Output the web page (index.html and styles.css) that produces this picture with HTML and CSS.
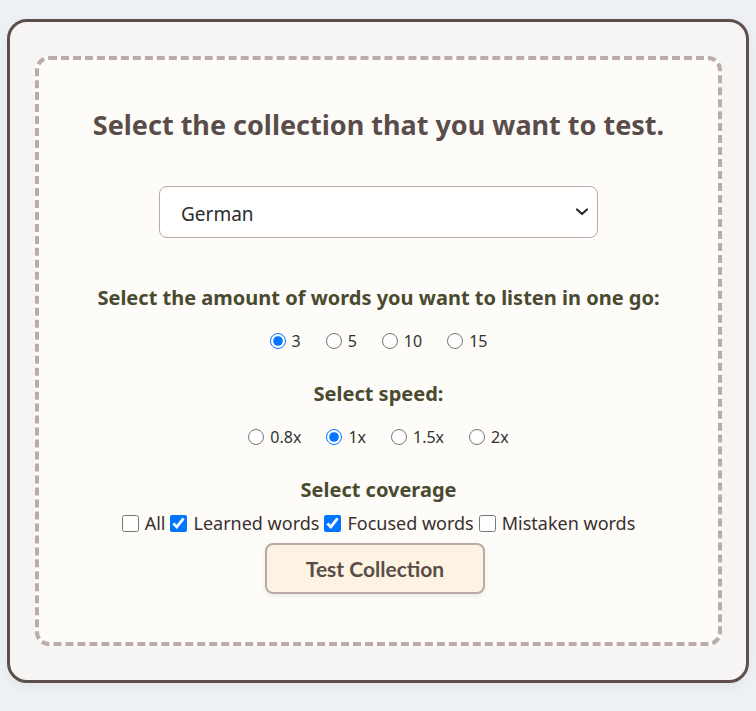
FILE: index.html
```html
<!DOCTYPE html>
<html lang="en">
<head>
<meta charset="utf-8">
<title>Test Collection</title>
<link rel="stylesheet" href="styles.css">
</head>
<body>
<main class="card">
  <section class="panel">
    <h1 class="title">Select the collection that you want to test.</h1>
    <div class="select-wrap">
      <select class="collection">
        <option>German</option>
      </select>
      <svg class="chevron" width="12" height="8" viewBox="0 0 12 8"><path d="M1 1.5 L6 6 L11 1.5" fill="none" stroke="#2b2b2b" stroke-width="2.2" stroke-linecap="round" stroke-linejoin="round"/></svg>
    </div>

    <h2 class="sub sub-first">Select the amount of words you want to listen in one go:</h2>
    <div class="options">
      <label class="opt"><input type="radio" name="amount" checked>3</label>
      <label class="opt"><input type="radio" name="amount">5</label>
      <label class="opt"><input type="radio" name="amount">10</label>
      <label class="opt"><input type="radio" name="amount">15</label>
    </div>

    <h2 class="sub">Select speed:</h2>
    <div class="options">
      <label class="opt"><input type="radio" name="speed">0.8x</label>
      <label class="opt"><input type="radio" name="speed" checked>1x</label>
      <label class="opt"><input type="radio" name="speed">1.5x</label>
      <label class="opt"><input type="radio" name="speed">2x</label>
    </div>

    <h2 class="sub sub-tight">Select coverage</h2>
    <div class="checks">
      <label class="chk"><input type="checkbox">All</label>
      <label class="chk"><input type="checkbox" checked>Learned words</label>
      <label class="chk"><input type="checkbox" checked>Focused words</label>
      <label class="chk"><input type="checkbox">Mistaken words</label>
    </div>

    <button class="test-btn" type="button">Test Collection</button>
  </section>
</main>
</body>
</html>
```

FILE: styles.css
```css
* { box-sizing: border-box; }

html, body {
  margin: 0;
  padding: 0;
}

body {
  background: #eff2f5;
  font-family: "Noto Sans", "Open Sans", sans-serif;
  padding: 19px 7px 29px;
}

.card {
  border: 3px solid #5d504c;
  border-radius: 20px;
  background: #f7f5f3;
  padding: 34px 24px 34px 25px;
  box-shadow: 0 4px 14px rgba(60, 70, 90, 0.08);
}

.panel {
  border: 4px dashed #bcaca8;
  border-radius: 14px;
  background: #fdfcf9;
  padding: 47px 20px 48px;
  display: flex;
  flex-direction: column;
  align-items: center;
}

.title {
  margin: 0;
  font-size: 27px;
  line-height: 36px;
  font-weight: 700;
  color: #5a4d49;
}

.select-wrap {
  position: relative;
  margin-top: 43px;
  width: 439px;
}

.collection {
  appearance: none;
  -webkit-appearance: none;
  width: 100%;
  height: 52px;
  border: 1px solid #b8a9a5;
  border-radius: 8px;
  background: #ffffff;
  padding: 3px 21px 0;
  font-family: inherit;
  font-size: 19px;
  color: #2c2c2c;
}

.chevron {
  position: absolute;
  right: 10px;
  top: 22px;
}

.sub {
  margin: 28px 0 0;
  font-size: 20px;
  line-height: 26px;
  font-weight: 700;
  color: #4a4a2f;
}

.sub-first { margin-top: 47px; }

.options {
  margin-top: 18px;
  display: flex;
  justify-content: center;
  gap: 25px;
  height: 24px;
  align-items: center;
}

.opt {
  display: inline-flex;
  align-items: center;
  font-size: 16px;
  color: #333333;
}

.opt input {
  width: 16px;
  height: 16px;
  margin: 0 6px 0 0;
}

.checks {
  margin-top: 7px;
  display: flex;
  justify-content: center;
  align-items: center;
  gap: 5px;
  height: 26px;
}

.chk {
  display: inline-flex;
  align-items: center;
  font-size: 18px;
  color: #3a3030;
}

.chk input {
  width: 17px;
  height: 17px;
  margin: 0 6px 0 0;
}

.test-btn {
  margin: 7px 7px 0 0;
  width: 220px;
  height: 51px;
  border: 2px solid #b9aaa6;
  border-radius: 8px;
  background: #fdf3e2;
  font-family: "Lato", sans-serif;
  font-size: 21px;
  font-weight: 700;
  color: #5a4d49;
  box-shadow: 0 2px 5px rgba(0, 0, 0, 0.08);
}
```
